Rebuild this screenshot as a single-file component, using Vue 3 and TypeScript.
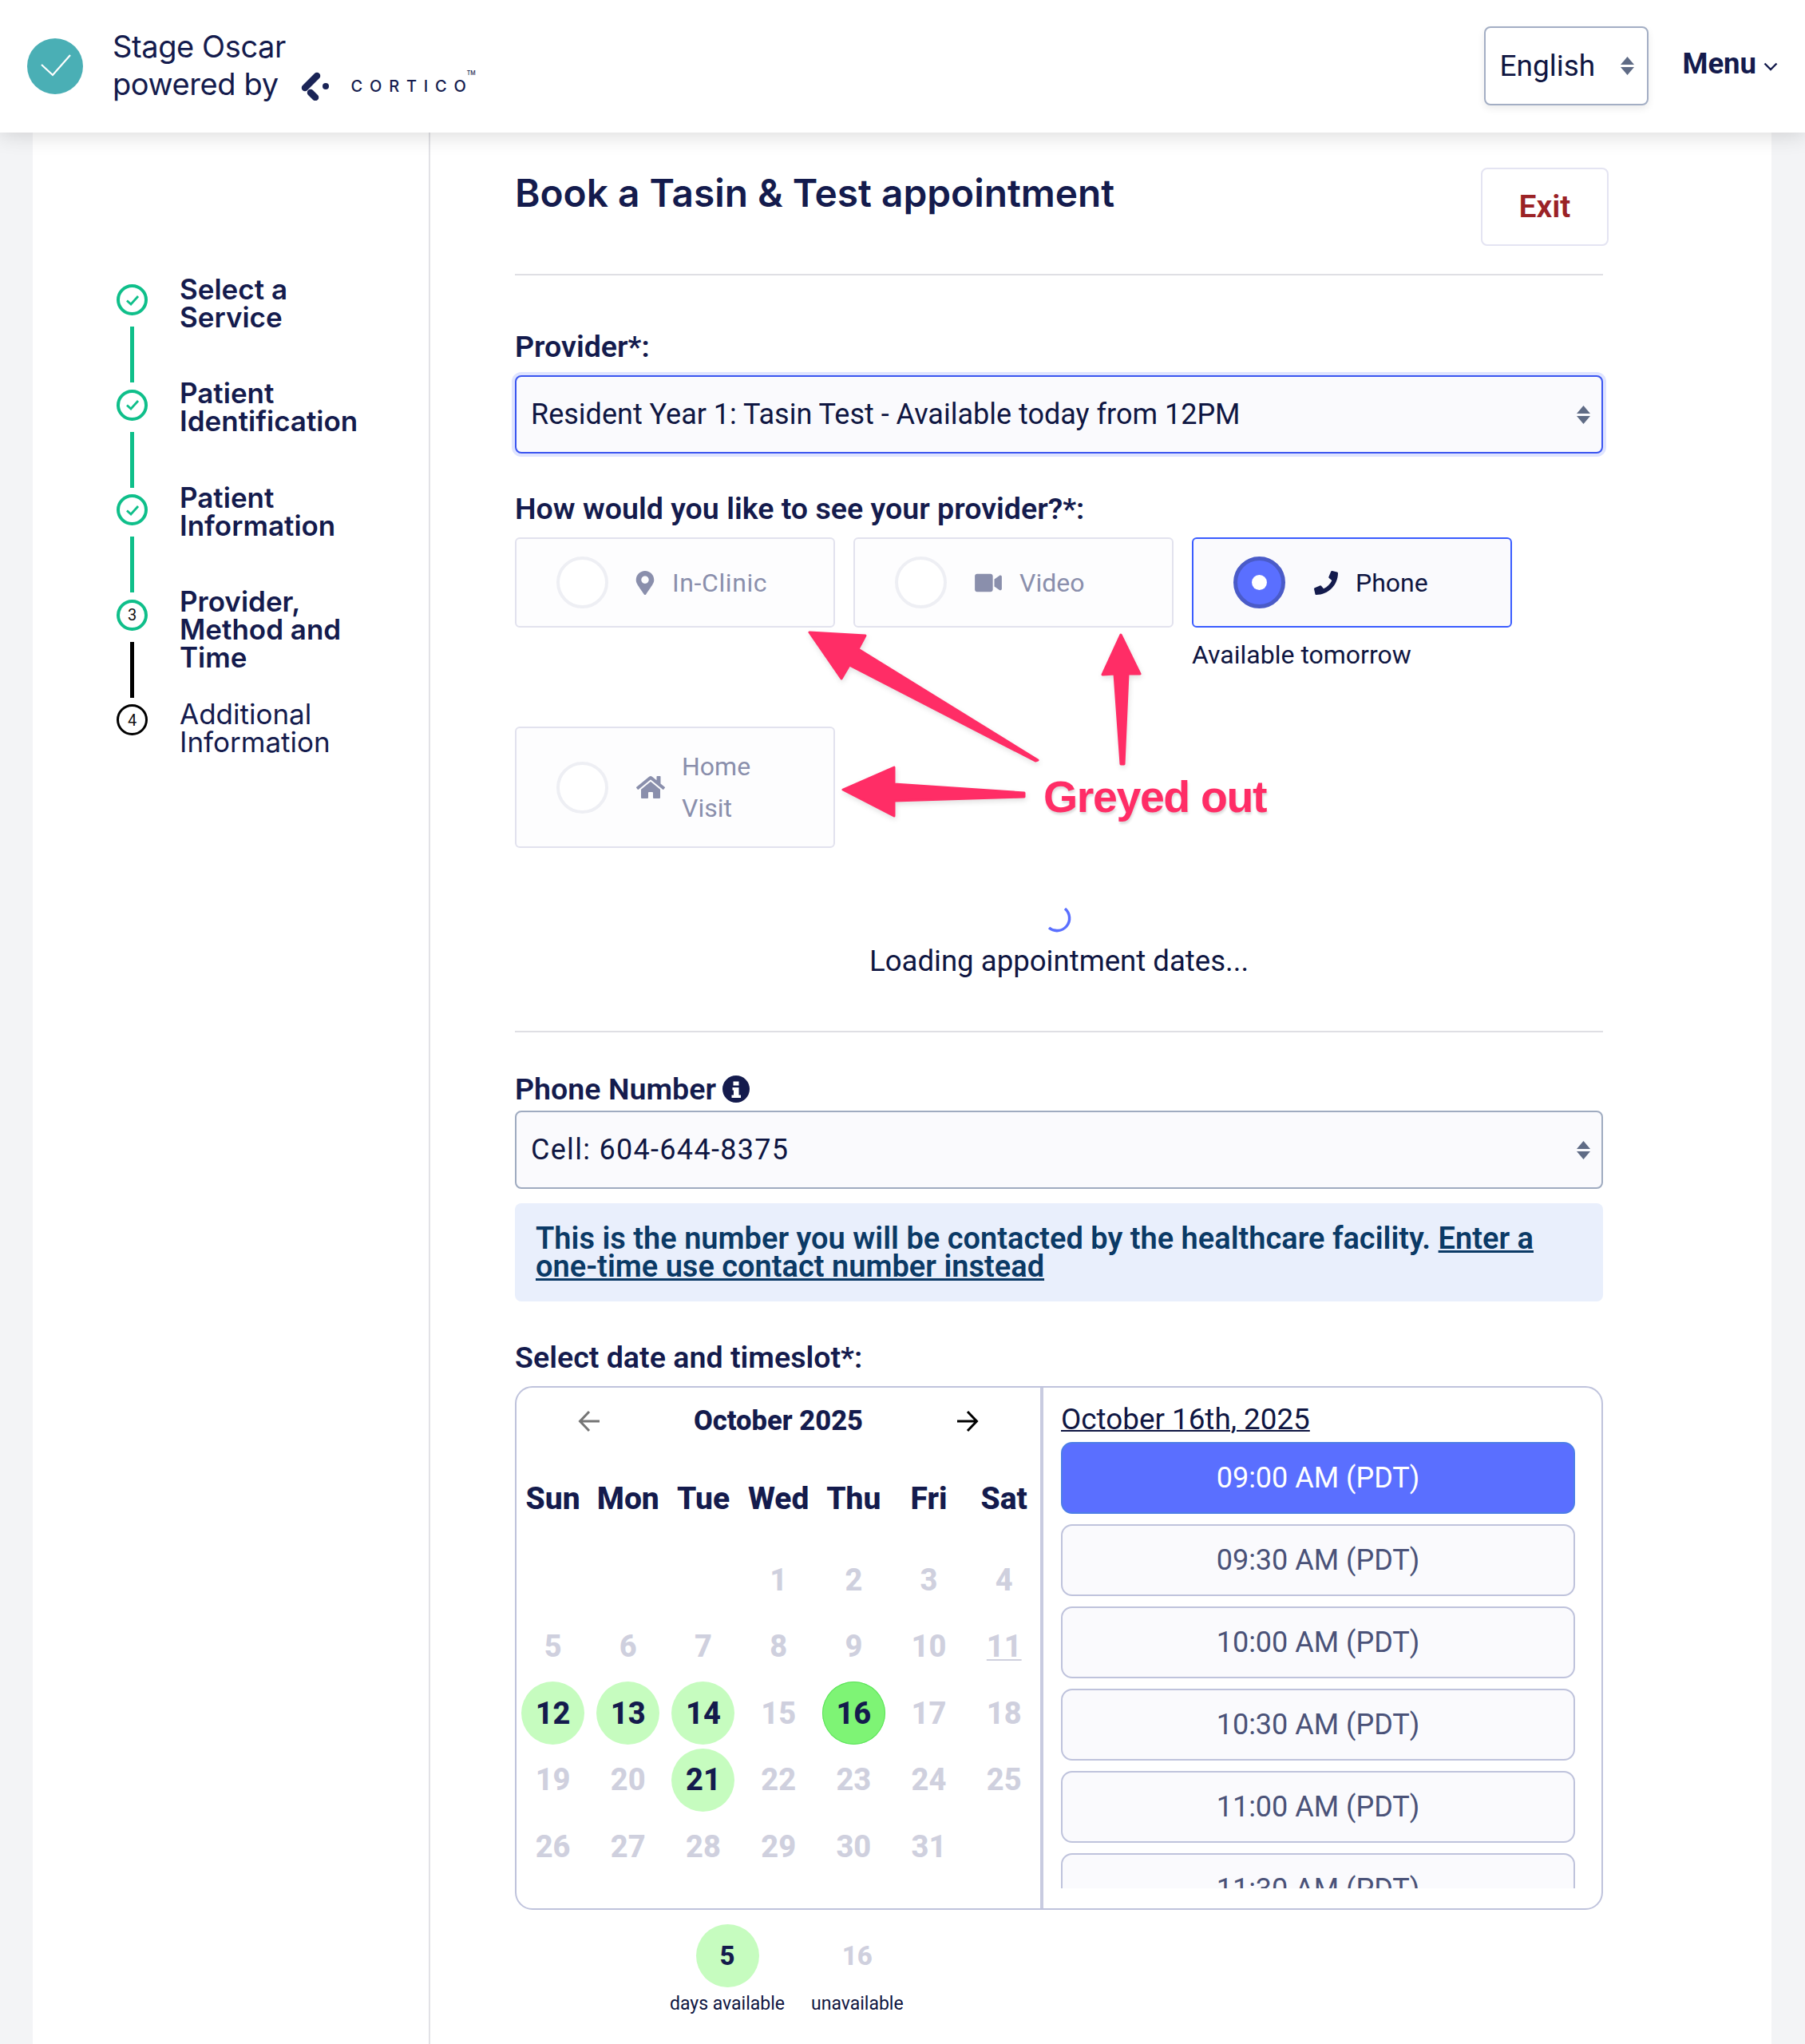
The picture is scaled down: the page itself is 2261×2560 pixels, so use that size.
<script setup lang="ts">
interface Step { lines: string[]; state: 'done' | 'current' | 'todo'; num?: number }
const steps: Step[] = [
  { lines: ['Select a', 'Service'], state: 'done' },
  { lines: ['Patient', 'Identification'], state: 'done' },
  { lines: ['Patient', 'Information'], state: 'done' },
  { lines: ['Provider,', 'Method and', 'Time'], state: 'current', num: 3 },
  { lines: ['Additional', 'Information'], state: 'todo', num: 4 },
]
const weekdays = ['Sun', 'Mon', 'Tue', 'Wed', 'Thu', 'Fri', 'Sat']
const available = [12, 13, 14, 21]
const cells: (number | null)[] = [null, null, null]
for (let d = 1; d <= 31; d++) cells.push(d)
function dayClass(d: number | null): string {
  if (d === null) return 'day'
  if (d === 16) return 'day selected'
  if (available.includes(d)) return 'day open'
  if (d === 11) return 'day off today'
  return 'day off'
}
const slots = ['09:00 AM (PDT)', '09:30 AM (PDT)', '10:00 AM (PDT)', '10:30 AM (PDT)', '11:00 AM (PDT)', '11:30 AM (PDT)']
</script>

<template>
  <div class="page">
    <header class="topbar">
      <div class="brand">
        <svg class="logo" viewBox="0 0 70 70">
          <circle cx="35" cy="35" r="35" fill="#4aafb5" />
          <path d="M18 33 L32 46 L54 21" fill="none" stroke="#fff" stroke-width="2.2" />
        </svg>
        <div class="brand-text">
          <div>Stage Oscar</div>
          <div class="powered">
            <span>powered by</span>
            <svg class="cortico-mark" viewBox="0 0 36 36">
              <path d="M20 5 L5 20" stroke="#1a2456" stroke-width="8.5" stroke-linecap="round" />
              <path d="M12 26 L18 32" stroke="#1a2456" stroke-width="8.5" stroke-linecap="round" />
              <circle cx="31" cy="18" r="4" fill="#1a2456" />
            </svg>
            <span class="cortico">CORTICO<sup>TM</sup></span>
          </div>
        </div>
      </div>
      <div class="top-actions">
        <div class="lang">
          <span>English</span>
          <svg class="updown" viewBox="0 0 17 23"><path d="M8.5 0 L17 10 H0 Z M8.5 23 L0 13 H17 Z" fill="#5f6b85" /></svg>
        </div>
        <div class="menu">
          <span>Menu</span>
          <svg class="chev" viewBox="0 0 18 11"><path d="M1.5 1.5 L9 9 L16.5 1.5" fill="none" stroke="#141b4d" stroke-width="2.4" /></svg>
        </div>
      </div>
    </header>

    <div class="shell">
      <aside class="sidebar">
        <div v-for="(s, i) in steps" :key="i" class="step">
          <div class="rail">
            <div class="dot" :class="s.state">
              <svg v-if="s.state === 'done'" class="tick" viewBox="0 0 18 14"><path d="M2 7.5 L7 12 L16 2" fill="none" stroke="#0fbf8a" stroke-width="2.8" /></svg>
              <span v-else>{{ s.num }}</span>
            </div>
            <div v-if="i < steps.length - 1" class="bar" :class="{ black: s.state === 'current' }"></div>
          </div>
          <div class="step-label" :class="[`nudge-${i}`, { regular: s.state === 'todo' }]">
            <div v-for="l in s.lines" :key="l">{{ l }}</div>
          </div>
        </div>
      </aside>

      <main class="content">
        <div class="title-row">
          <h1>Book a Tasin &amp; Test appointment</h1>
          <button class="exit">Exit</button>
        </div>
        <hr class="rule" />

        <label class="field-label provider-label">Provider*:</label>
        <div class="select focus">
          <span>Resident Year 1: Tasin Test - Available today from 12PM</span>
          <svg class="updown" viewBox="0 0 17 23"><path d="M8.5 0 L17 10 H0 Z M8.5 23 L0 13 H17 Z" fill="#5f6b85" /></svg>
        </div>

        <label class="field-label how-label">How would you like to see your provider?*:</label>
        <div class="methods">
          <div class="method">
            <span class="radio"></span>
            <svg class="m-icon pin" viewBox="0 0 384 512"><path d="M172.268 501.67C26.97 291.031 0 262.413 0 192 0 85.961 85.961 0 192 0s192 85.961 192 192c0 70.413-26.97 99.031-172.268 309.67-9.535 13.774-29.93 13.773-39.464 0zM192 272c44.183 0 80-35.817 80-80s-35.817-80-80-80-80 35.817-80 80 35.817 80 80 80z" /></svg>
            <span class="m-text clinic">In-Clinic</span>
          </div>
          <div class="method">
            <span class="radio"></span>
            <svg class="m-icon video" viewBox="0 0 576 512"><path d="M336.2 64H47.8C21.4 64 0 85.4 0 111.8v288.4C0 426.6 21.4 448 47.8 448h288.4c26.4 0 47.8-21.4 47.8-47.8V111.8c0-26.4-21.4-47.8-47.8-47.8zm189.4 37.7L416 177.3v157.4l109.6 75.5c21.2 14.6 50.4-.3 50.4-25.8V127.5c0-25.4-29.1-40.4-50.4-25.8z" /></svg>
            <span class="m-text">Video</span>
          </div>
          <div class="method-col">
            <div class="method active">
              <span class="radio on"></span>
              <svg class="m-icon phone" viewBox="0 0 512 512"><path d="M493.4 24.6l-104-24c-11.3-2.6-22.9 3.3-27.5 13.9l-48 112c-4.2 9.8-1.4 21.3 6.9 28l60.6 49.6c-36 76.7-98.9 140.5-177.2 177.2l-49.6-60.6c-6.8-8.3-18.2-11.1-28-6.9l-112 48C3.9 366.5-2 378.1.6 389.4l24 104C27.1 504.2 36.7 512 48 512c256.1 0 464-207.5 464-464 0-11.2-7.7-20.9-18.6-23.4z" /></svg>
              <span class="m-text">Phone</span>
            </div>
            <div class="avail">Available tomorrow</div>
          </div>
          <div class="method tall">
            <span class="radio"></span>
            <svg class="m-icon home" viewBox="0 0 576 512"><path d="M280.37 148.26L96 300.11V464a16 16 0 0 0 16 16l112.06-.29a16 16 0 0 0 15.92-16V368a16 16 0 0 1 16-16h64a16 16 0 0 1 16 16v95.64a16 16 0 0 0 16 16.05L464 480a16 16 0 0 0 16-16V300L295.67 148.26a12.19 12.19 0 0 0-15.3 0zM571.6 251.47L488 182.56V44.05a12 12 0 0 0-12-12h-56a12 12 0 0 0-12 12v72.61L318.47 43a48 48 0 0 0-61 0L4.34 251.47a12 12 0 0 0-1.6 16.9l25.5 31A12 12 0 0 0 45.15 301l235.22-193.74a12.19 12.19 0 0 1 15.3 0L530.9 301a12 12 0 0 0 16.9-1.6l25.5-31a12 12 0 0 0-1.7-16.93z" /></svg>
            <span class="m-text home-text">Home<br />Visit</span>
          </div>
        </div>

        <div class="loading">
          <svg class="spinner" viewBox="0 0 30 32"><path d="M22 2 A14 14 0 0 1 2 26" fill="none" stroke="#5a6fff" stroke-width="3.500" /></svg>
          <div>Loading appointment dates...</div>
        </div>
        <hr class="rule second" />

        <label class="field-label phone-label">
          Phone Number
          <svg class="info" viewBox="0 0 34 34">
            <circle cx="17" cy="17" r="17" fill="#141b4d" />
            <path d="M13.5 7.5h7v5h-7z M12.5 15h8v9.5h2.5v3.5H11.500v-3.500h2.500V18.500h-1.500z" fill="#fff" />
          </svg>
        </label>
        <div class="select number">
          <span class="digits">Cell: 604-644-8375</span>
          <svg class="updown" viewBox="0 0 17 23"><path d="M8.5 0 L17 10 H0 Z M8.5 23 L0 13 H17 Z" fill="#5f6b85" /></svg>
        </div>
        <div class="notice">
          This is the number you will be contacted by the healthcare facility. <u>Enter a<br />one-time use contact number instead</u>
        </div>

        <label class="field-label slot-label">Select date and timeslot*:</label>
        <div class="picker">
          <div class="calendar">
            <div class="cal-head">
              <svg class="arrow" viewBox="0 0 28 28"><path d="M27 14 H3 M14 2 L2.500 14 L14 26" fill="none" stroke="#757575" stroke-width="3" /></svg>
              <span class="month">October 2025</span>
              <svg class="arrow" viewBox="0 0 28 28"><path d="M1 14 H25 M14 2 L25.500 14 L14 26" fill="none" stroke="#000" stroke-width="3" /></svg>
            </div>
            <div class="weekdays">
              <span v-for="w in weekdays" :key="w">{{ w }}</span>
            </div>
            <div class="days">
              <div v-for="(d, i) in cells" :key="i" :class="dayClass(d)"><span>{{ d }}</span></div>
            </div>
          </div>
          <div class="times">
            <div class="date-head">October 16th, 2025</div>
            <div class="slot-list">
              <div v-for="(t, i) in slots" :key="t" class="slot" :class="{ picked: i === 0 }">{{ t }}</div>
            </div>
          </div>
        </div>

        <div class="legend">
          <div class="legend-item">
            <div class="legend-num open">5</div>
            <div class="legend-text">days available</div>
          </div>
          <div class="legend-item">
            <div class="legend-num off">16</div>
            <div class="legend-text">unavailable</div>
          </div>
        </div>
      </main>
    </div>

    <svg class="arrows" viewBox="0 0 2261 2560">
      <g fill="#ff2d66" stroke="#ff2d66" stroke-width="3" stroke-linejoin="round">
        <path d="M1014 792 L1084 796 L1075 813 L1300 952 L1297 953 L1064 833 L1054 850 Z" />
        <path d="M1404 795 L1428 844 L1413 844 L1408 957 L1404 957 L1396 844 L1381 845 Z" />
        <path d="M1056 989 L1120 961 L1120 982 L1283 993 L1283 998 L1120 1003 L1120 1022 Z" />
      </g>
    </svg>
    <div class="greyed">Greyed out</div>
  </div>
</template>

<style>
html, body { margin: 0; background: #f3f4f6; }
</style>

<style scoped>
.page {
  position: relative;
  height: 2560px;
  overflow: hidden;
  background: #f3f4f6;
  font-family: Roboto, "Liberation Sans", sans-serif;
  color: #0f1642;
}
.topbar {
  position: relative;
  z-index: 2;
  height: 166px;
  box-sizing: border-box;
  background: #fff;
  box-shadow: 0 2px 26px rgba(0, 0, 0, 0.16);
  display: flex;
  align-items: center;
  justify-content: space-between;
  padding: 0 34px 0 34px;
}
.brand { display: flex; align-items: center; gap: 37px; }
.logo { width: 70px; height: 70px; }
.brand-text {
  font-family: Inter, sans-serif;
  font-size: 38px;
  line-height: 47px;
  letter-spacing: -0.4px;
  color: #141b4d;
  margin-top: -2px;
}
.powered { display: flex; align-items: center; }
.cortico-mark { width: 36px; height: 36px; margin-left: 28px; margin-top: 4px; }
.cortico {
  font-family: Inter, sans-serif;
  font-size: 20px;
  font-weight: 500;
  letter-spacing: 8.800px;
  margin-left: 27px;
  margin-top: 4px;
  line-height: 24px;
  position: relative;
}
.cortico sup { position: absolute; top: -8px; left: 100%; margin-left: -8px; font-size: 7px; line-height: 8px; letter-spacing: 0; }
.top-actions { display: flex; align-items: center; }
.lang {
  width: 206px;
  height: 99px;
  margin-top: -2px;
  box-sizing: border-box;
  border: 2px solid #a3aec4;
  border-radius: 8px;
  box-shadow: 0 4px 10px rgba(0, 0, 0, 0.08);
  padding: 0 16px 0 17px;
  display: flex;
  align-items: center;
  justify-content: space-between;
  font-size: 37px;
  background: #fff;
}
.updown { width: 17px; height: 23px; flex: none; }
.menu {
  display: flex;
  align-items: center;
  margin-left: 42px;
  margin-top: -8px;
  font-size: 36.500px;
  font-weight: 700;
  color: #141b4d;
}
.chev { width: 18px; height: 11px; margin-left: 9px; margin-top: 8px; }

.shell {
  width: 2178px;
  margin-left: 41px;
  min-height: 2394px;
  background: #fff;
  display: flex;
}
.sidebar {
  width: 496px;
  flex: none;
  box-sizing: content-box;
  border-right: 2px solid #e2e2e6;
  padding-top: 178px;
}
.step { display: flex; height: 131.5px; }
.rail { width: 184px; padding-left: 105px; box-sizing: border-box; flex: none; padding-top: 12px; }
.dot {
  width: 39px;
  height: 39px;
  box-sizing: border-box;
  border-radius: 50%;
  border: 4px solid #0fbf8a;
  display: flex;
  align-items: center;
  justify-content: center;
  font-size: 20px;
  color: #111;
}
.dot.todo { border-color: #000; border-width: 3px; }
.tick { width: 18px; height: 14px; }
.bar { width: 5px; height: 70px; margin: 14px 0 0 17px; background: #0fbf8a; }
.bar.black { background: #000; }
.step-label { font-family: Inter, sans-serif; font-size: 35px; line-height: 35px; font-weight: 600; color: #141b4d; }
.step-label.regular { font-weight: 400; }
.nudge-0 { margin-top: 1px; }
.nudge-1, .nudge-2 { margin-top: -1px; }
.nudge-3 { margin-top: -3px; }
.nudge-4 { margin-top: 7px; }

.content { flex: 1; min-width: 0; padding: 0 211px 0 106px; box-sizing: border-box; }
.title-row { display: flex; justify-content: space-between; align-items: flex-start; height: 177px; }
h1 {
  margin: 48px 0 0;
  font-family: Inter, sans-serif;
  font-size: 47.800px;
  line-height: 56px;
  font-weight: 600;
  color: #141b4d;
}
.exit {
  margin: 44px -7px 0 0;
  width: 160px;
  height: 98px;
  border: 2px solid #e4e4f2;
  border-radius: 8px;
  background: #fff;
  color: #9b2226;
  font-family: inherit;
  font-size: 39px;
  font-weight: 600;
}
.rule { height: 2px; border: 0; margin: 0; background: #dfdfe4; }
.field-label { display: block; font-size: 37.600px; font-weight: 600; line-height: 44px; color: #141b4d; }
.provider-label { margin-top: 67px; }
.select {
  height: 98px;
  box-sizing: border-box;
  margin-top: 14px;
  padding: 0 14px 0 18px;
  border: 2px solid #9fabc0;
  border-radius: 8px;
  background: #fafafd;
  display: flex;
  align-items: center;
  justify-content: space-between;
  font-size: 36px;
}
.select.focus { border-color: #3a55f0; box-shadow: 0 0 0 4px #dfe4ff; }
.select.number { margin-top: 5px; }
.digits { letter-spacing: 1.300px; }
.how-label { margin-top: 47px; }
.methods {
  display: grid;
  grid-template-columns: repeat(3, 401px);
  column-gap: 23px;
  grid-template-rows: 113px 152px;
  row-gap: 124px;
  margin-top: 14px;
}
.method {
  box-sizing: border-box;
  height: 113px;
  border: 2px solid #e2e2ee;
  border-radius: 6px;
  background: #fdfdfe;
  display: flex;
  align-items: center;
  padding-left: 50px;
  font-size: 32px;
  color: #8a8fac;
}
.method.active { border-color: #3a5cff; background: #fafafd; color: #0f1642; }
.method.tall { height: 152px; }
.radio { width: 65px; height: 65px; box-sizing: border-box; border-radius: 50%; border: 4px solid #eeeff4; flex: none; background: #fff; position: relative; }
.radio.on { background: #5a6fff; border: 5px solid #4a5bc8; }
.radio.on::after { content: ''; position: absolute; left: 18px; top: 18px; width: 19px; height: 19px; border-radius: 50%; background: #fff; }
.m-icon { fill: #8a8fac; flex: none; }
.pin { width: 24px; height: 30px; margin-left: 34px; }
.video { width: 34px; height: 30px; margin-left: 35px; }
.phone { width: 30px; height: 30px; margin-left: 36px; fill: #141b4d; }
.home { width: 36px; height: 32px; margin-left: 35px; }
.m-text { margin-left: 22px; }
.home-text { margin-left: 21px; line-height: 52px; }
.clinic { letter-spacing: 0.600px; }
.avail { margin-top: 15px; font-size: 32px; line-height: 38px; color: #0f1642; }
.loading { margin-top: 74px; text-align: center; font-size: 36.600px; line-height: 44px; }
.spinner { display: block; margin: 0 auto 14px; width: 30px; height: 32px; }
.second { margin-top: 65px; }
.phone-label { margin-top: 49px; display: flex; align-items: center; gap: 8px; }
.info { width: 34px; height: 34px; }
.notice {
  margin-top: 18px;
  padding: 27px 26px 0;
  height: 123px;
  box-sizing: border-box;
  background: #e9effc;
  border-radius: 8px;
  font-size: 38px;
  line-height: 35px;
  font-weight: 600;
  color: #0b3a66;
  white-space: nowrap;
}
.notice u { color: #0b3a66; }
.slot-label { margin-top: 48px; }
.picker {
  margin-top: 14px;
  height: 656px;
  box-sizing: border-box;
  border: 2px solid #bfc3dc;
  border-radius: 22px;
  display: flex;
  overflow: hidden;
}
.calendar { width: 660px; box-sizing: border-box; flex: none; border-right: 4px solid #c8cbe0; }
.cal-head { display: flex; align-items: center; justify-content: space-between; height: 82px; padding: 0 77px; }
.arrow { width: 28px; height: 28px; margin-top: 2px; }
.month { font-size: 34.600px; font-weight: 800; color: #141b4d; }
.weekdays { display: grid; grid-template-columns: repeat(7, 94.200px); height: 70px; align-items: center; text-align: center; font-size: 39px; font-weight: 800; color: #141b4d; margin: 22px 0 0 -1.500px; }
.days { display: grid; grid-template-columns: repeat(7, 94.200px); grid-auto-rows: 83.500px; margin: 25px 0 0 -1.500px; }
.day { display: flex; align-items: center; justify-content: center; font-size: 38px; font-weight: 800; }
.day span { width: 79px; height: 79px; border-radius: 50%; display: flex; align-items: center; justify-content: center; }
.day.off { color: #cfd0de; }
.day.today span { text-decoration: underline; text-decoration-thickness: 2px; text-underline-offset: 3px; }
.day.open span { background: #c6fcbf; color: #141b4d; }
.day.selected span { background: #7ef475; color: #141b4d; box-shadow: inset 0 0 0 1px #5ce35a; }
.times { flex: 1; min-width: 0; padding: 0 33px 0 22px; }
.date-head { height: 68px; box-sizing: border-box; padding-top: 18px; line-height: 44px; font-size: 36.800px; text-decoration: underline; text-decoration-thickness: 2px; }
.slot-list { height: 559px; overflow: hidden; }
.slot {
  box-sizing: border-box;
  height: 90px;
  margin-bottom: 13px;
  border: 2px solid #bfc3dc;
  border-radius: 14px;
  background: #fafafd;
  display: flex;
  align-items: center;
  justify-content: center;
  font-size: 36px;
  color: #4a5278;
}
.slot.picked { background: #5a6fff; border-color: #4d7ee8; color: #fff; }
.legend { display: flex; margin-top: 18px; padding-left: 194px; gap: 33px; }
.legend-item { display: flex; flex-direction: column; align-items: center; }
.legend-num { width: 79px; height: 79px; border-radius: 50%; display: flex; align-items: center; justify-content: center; font-size: 33px; font-weight: 800; }
.legend-num.open { background: #c6fcbf; color: #141b4d; }
.legend-num.off { color: #cfd0de; }
.legend-text { font-size: 23px; line-height: 30px; margin-top: 6px; }

.arrows { position: absolute; left: 0; top: 0; width: 2261px; height: 2560px; pointer-events: none; filter: drop-shadow(1px 3px 3px rgba(0,0,0,0.12)); }
.greyed {
  position: absolute;
  left: 1307px;
  top: 967px;
  font-family: "Liberation Sans", sans-serif;
  font-size: 55.500px;
  line-height: 62px;
  font-weight: 700;
  letter-spacing: -1.400px;
  color: #ff2d66;
  text-shadow: 1px 3px 3px rgba(0,0,0,0.14);
  white-space: nowrap;
}
</style>
